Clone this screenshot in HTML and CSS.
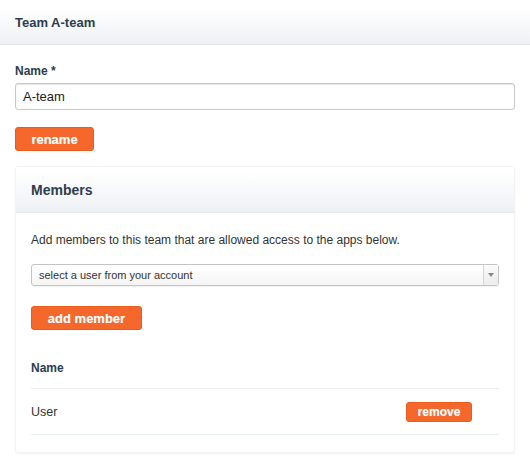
FILE: index.html
```html
<!DOCTYPE html>
<html>
<head>
<meta charset="utf-8">
<link rel="stylesheet" href="styles.css">
</head>
<body>
<header class="page-header">
  <h1 class="page-title">Team A-team</h1>
</header>
<main class="content">
  <form class="rename-form">
    <label class="field-label" for="name">Name *</label>
    <input class="text-input" id="name" type="text" value="A-team">
    <button class="btn btn-rename" type="button">rename</button>
  </form>
  <section class="card">
    <div class="card-header">
      <h2 class="card-title">Members</h2>
    </div>
    <div class="card-body">
      <p class="intro">Add members to this team that are allowed access to the apps below.</p>
      <div class="select">
        <span class="select-text">select a user from your account</span>
        <span class="select-arrow"></span>
      </div>
      <button class="btn btn-add" type="button">add member</button>
      <div class="table">
        <div class="table-head">Name</div>
        <div class="table-row">
          <span class="user">User</span>
          <button class="btn btn-remove" type="button">remove</button>
        </div>
      </div>
    </div>
  </section>
</main>
</body>
</html>
```

FILE: styles.css
```css
* { box-sizing: border-box; }
html, body { margin: 0; padding: 0; background: #fff; }
body {
  font-family: "Liberation Sans", Arial, sans-serif;
  color: #2b3a48;
  width: 530px;
  height: 466px;
  overflow: hidden;
}
.page-header {
  height: 45px;
  display: flex;
  align-items: center;
  padding: 0 15px;
  background: linear-gradient(#ffffff 15%, #eef1f4 100%);
  border-bottom: 1px solid #e3e8ec;
}
.page-title {
  margin: 0;
  font-size: 13px;
  font-weight: bold;
  color: #2d3d4d;
}
.content { padding: 0 15px; }
.rename-form { display: flex; flex-direction: column; align-items: flex-start; }
.field-label {
  margin-top: 19px;
  font-size: 12px;
  font-weight: bold;
  color: #2d3d4d;
  line-height: 14px;
}
.text-input {
  margin-top: 5px;
  width: 500px;
  height: 27px;
  border: 1px solid #c9c9c9;
  box-shadow: inset 0 1px 1px #e6e6e6;
  border-radius: 3px;
  padding: 0 7px;
  font-family: inherit;
  font-size: 13px;
  color: #222;
  outline: none;
}
.btn {
  font-family: inherit;
  font-weight: bold;
  color: #fff;
  background: #f5672a;
  border: 1px solid #ea5c1c;
  border-radius: 3px;
  padding: 0;
  cursor: pointer;
  text-shadow: 0 0 1px rgba(255,255,255,0.4);
}
.btn-rename {
  margin-top: 17px;
  width: 79px;
  height: 24px;
  font-size: 13px;
}
.card {
  margin-top: 15px;
  width: 500px;
  border: 1px solid #f1f3f5;
  border-radius: 3px;
  box-shadow: 0 1px 2px rgba(0,0,0,0.06);
}
.card-header {
  height: 46px;
  display: flex;
  align-items: center;
  padding: 0 15px;
  background: linear-gradient(#ffffff 10%, #eef1f4 100%);
  border-bottom: 1px solid #e6eaee;
}
.card-title {
  margin: 0;
  font-size: 14px;
  font-weight: bold;
  color: #2d3d4d;
}
.card-body { padding: 0 15px 17px; }
.intro {
  margin: 19px 0 0;
  font-size: 12px;
  line-height: 16px;
  color: #333;
}
.select {
  margin-top: 16px;
  height: 22px;
  display: flex;
  align-items: stretch;
  border: 1px solid #c4c4c4;
  border-radius: 3px;
  background: linear-gradient(#ffffff, #f5f5f5);
  box-shadow: 0 1px 1px rgba(0,0,0,0.06);
}
.select-text {
  flex: 1;
  display: flex;
  align-items: center;
  padding-left: 7px;
  font-size: 11px;
  color: #333;
}
.select-arrow {
  width: 15px;
  border-left: 1px solid #d6d6d6;
  background: linear-gradient(#fafafa, #ececec);
  display: flex;
  align-items: center;
  justify-content: center;
}
.select-arrow::after {
  content: "";
  border-left: 3px solid transparent;
  border-right: 3px solid transparent;
  border-top: 4px solid #888;
}
.btn-add {
  margin-top: 20px;
  width: 111px;
  height: 24px;
  font-size: 13px;
}
.table { margin-top: 32px; }
.table-head {
  font-size: 12px;
  font-weight: bold;
  color: #2d3d4d;
  padding-bottom: 13px;
  line-height: 13px;
  border-bottom: 1px solid #eceef0;
}
.table-row {
  height: 46px;
  display: flex;
  align-items: center;
  justify-content: space-between;
  padding-right: 27px;
  border-bottom: 1px solid #e9eef0;
}
.user { font-size: 12.5px; color: #333; }
.btn-remove {
  width: 66px;
  height: 20px;
  font-size: 12px;
}
```
